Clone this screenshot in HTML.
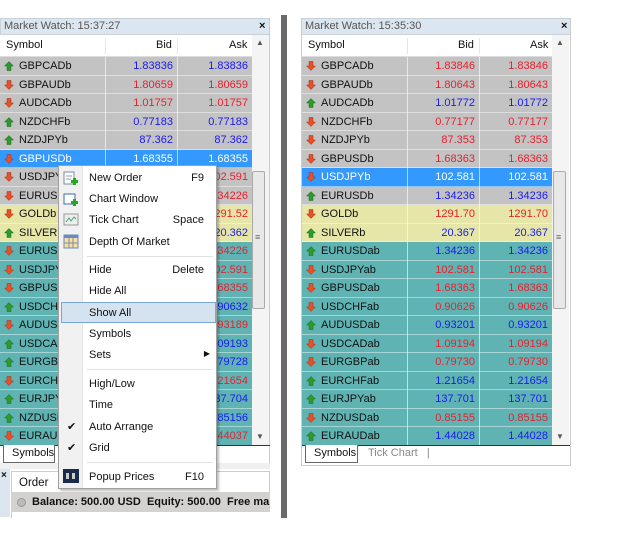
<!DOCTYPE html>
<html><head><meta charset="utf-8">
<style>
*{margin:0;padding:0;box-sizing:border-box}
body{width:642px;height:542px;background:#fff;position:relative;overflow:hidden;font-family:"Liberation Sans",sans-serif;font-size:11px;color:#111}
.a{position:absolute}
.title{position:absolute;height:17px;background:#dce6f0;border:1px solid #c8d0d8;color:#555;font-size:11px;line-height:15px;padding-left:3px}
.x{position:absolute;font-weight:bold;font-size:11px}
.hdr{position:absolute;height:22px;background:#fff;border-bottom:1px solid #ddd}
.hdr span{position:absolute;top:4px}
.row{position:absolute;height:18.5px;line-height:19px;border-bottom:1px solid rgba(255,255,255,.45)}
.row .s{position:absolute;left:19px;top:0}
.row .b,.row .k{position:absolute;top:0;text-align:right}
.row i{position:absolute;left:4px;top:4px;width:10px;height:10px;display:block;line-height:0}
.row i svg{display:block}
.g{background:#c3c3c3}.y{background:#e6e6a8}.t{background:#5fb3b3}.sel{background:#3399ff;color:#fff}
.sel .b,.sel .k{color:#fff!important}
.bl{color:#1a1aee}.rd{color:#e8202e}
.vl{position:absolute;width:1px;background:rgba(255,255,255,.6)}
.sb{position:absolute;background:#f4f4f4}
.thumb{position:absolute;background:#e8e8e8;border:1px solid #aaa;border-radius:2px}
.menu{position:absolute;left:58px;top:165px;width:159px;height:324px;background:#fff;border:1px solid #a0a0a0;box-shadow:2px 2px 2px rgba(0,0,0,.25)}
.menu .ic{position:absolute;left:0;top:0;width:24px;height:100%;background:#f1f1f1;border-right:1px solid #e4e4e4}
.mi{position:absolute;left:30px;font-size:11px;color:#111}
.sc{position:absolute;right:12px;font-size:11px}
.sep{position:absolute;left:28px;right:3px;height:1px;background:#e2e2e2}
</style></head><body>

<div class="title" style="left:0;top:18px;width:270px">Market Watch: 15:37:27</div>
<div class="x" style="left:259px;top:20px">×</div>
<div class="hdr" style="left:0;top:35px;width:252px">
<span style="left:6px">Symbol</span><span style="left:156px">Bid</span><span style="left:229px">Ask</span>
</div>
<div class="a" style="left:105px;top:38px;width:1px;height:16px;background:#e6e6e6"></div>
<div class="a" style="left:177px;top:38px;width:1px;height:16px;background:#e6e6e6"></div>
<div class="sb" style="left:252px;top:35px;width:17px;height:410px"></div>
<div class="a" style="left:256px;top:38px;font-size:8px;color:#555">▲</div>
<div class="a" style="left:256px;top:432px;font-size:8px;color:#555">▼</div>
<div class="thumb" style="left:252px;top:171px;width:13px;height:138px"></div>
<div class="a" style="left:255px;top:232px;font-size:9px;color:#666">≡</div>
<div class="a" style="left:269px;top:18px;width:1px;height:448px;background:#ccc"></div>

<div id="L"></div>

<div class="a" style="left:0;top:445px;width:270px;height:1px;background:#333"></div>
<div class="a" style="left:3px;top:445px;width:52px;height:18px;background:#fff;border:1px solid #666;border-top:none;padding:2px 0 0 8px">Symbols</div>
<div class="a" style="left:0;top:463px;width:270px;height:6px;background:#f0f0f0"></div>
<div class="a" style="left:0;top:469px;width:10px;height:48px;background:#dce6f0"></div>
<div class="x" style="left:1px;top:470px;font-size:10px">×</div>
<div class="a" style="left:11px;top:471px;width:259px;height:21px;border:1px solid #ccc;border-bottom:none;background:#fff;padding:5px 0 0 7px;font-size:11.5px">Order</div>
<div class="a" style="left:11px;top:492px;width:259px;height:20px;background:#d4d2ce;line-height:20px;font-weight:bold;font-size:11px;white-space:nowrap;overflow:hidden;padding-left:21px">Balance: 500.00 USD&nbsp; Equity: 500.00&nbsp; Free margin: 5</div>
<div class="a" style="left:17px;top:498px;width:9px;height:9px;border-radius:50%;background:#bbb;border:1px solid #999"></div>
<div class="a" style="left:11px;top:512px;width:259px;height:6px;background:#fff;border-left:1px solid #ccc"></div>

<div class="a" style="left:281px;top:15px;width:6px;height:503px;background:#6a6a6a"></div>

<div class="title" style="left:301px;top:18px;width:270px">Market Watch: 15:35:30</div>
<div class="x" style="left:561px;top:20px">×</div>
<div class="hdr" style="left:302px;top:35px;width:250px">
<span style="left:6px">Symbol</span><span style="left:156px">Bid</span><span style="left:228px">Ask</span>
</div>
<div class="a" style="left:407px;top:38px;width:1px;height:16px;background:#e6e6e6"></div>
<div class="a" style="left:479px;top:38px;width:1px;height:16px;background:#e6e6e6"></div>
<div class="sb" style="left:552px;top:35px;width:17px;height:410px"></div>
<div class="a" style="left:556px;top:38px;font-size:8px;color:#555">▲</div>
<div class="a" style="left:556px;top:432px;font-size:8px;color:#555">▼</div>
<div class="thumb" style="left:553px;top:171px;width:13px;height:138px"></div>
<div class="a" style="left:556px;top:232px;font-size:9px;color:#666">≡</div>
<div class="a" style="left:301px;top:18px;width:1px;height:448px;background:#ccc"></div>
<div class="a" style="left:570px;top:18px;width:1px;height:448px;background:#ccc"></div>
<div id="R"></div>
<div class="a" style="left:302px;top:445px;width:268px;height:1px;background:#333"></div>
<div class="a" style="left:305px;top:445px;width:53px;height:18px;background:#fff;border:1px solid #666;border-top:none;padding:2px 0 0 8px">Symbols</div>
<div class="a" style="left:368px;top:447px;color:#888">Tick Chart&nbsp;&nbsp; |</div>
<div class="a" style="left:301px;top:465px;width:270px;height:1px;background:#ccc"></div>

<div class="menu">
<div class="ic"></div>
<svg class="a" style="left:4px;top:5px" width="16" height="16"><rect x="1" y="1" width="10" height="12" fill="#fff" stroke="#7a8aa0"/><line x1="3" y1="5" x2="9" y2="5" stroke="#99a"/><line x1="3" y1="8" x2="8" y2="8" stroke="#99a"/><rect x="8" y="9" width="7" height="3" fill="#2a2"/><rect x="10" y="7" width="3" height="7" fill="#2a2"/></svg>
<div class="mi" style="top:6px">New Order</div><div class="sc" style="top:6px">F9</div>
<svg class="a" style="left:4px;top:26px" width="16" height="16"><rect x="1" y="2" width="11" height="10" fill="#fff" stroke="#3a6ab0"/><rect x="8" y="9" width="7" height="3" fill="#2a2"/><rect x="10" y="7" width="3" height="7" fill="#2a2"/></svg>
<div class="mi" style="top:27px">Chart Window</div>
<svg class="a" style="left:4px;top:47px" width="16" height="14"><rect x="1" y="1" width="14" height="11" fill="#eee" stroke="#999"/><polyline points="3,9 6,5 8,8 11,4 13,6" fill="none" stroke="#4a7" /></svg>
<div class="mi" style="top:48px">Tick Chart</div><div class="sc" style="top:48px">Space</div>
<svg class="a" style="left:4px;top:68px" width="16" height="15"><rect x="1" y="1" width="14" height="13" fill="#f4e0a0" stroke="#6a8ac0"/><rect x="1" y="1" width="14" height="3" fill="#6a8ac0"/><line x1="6" y1="4" x2="6" y2="14" stroke="#88a"/><line x1="10" y1="4" x2="10" y2="14" stroke="#88a"/><line x1="1" y1="9" x2="15" y2="9" stroke="#88a"/></svg>
<div class="mi" style="top:70px">Depth Of Market</div>
<div class="sep" style="top:90px"></div>
<div class="mi" style="top:98px">Hide</div><div class="sc" style="top:98px">Delete</div>
<div class="mi" style="top:119px">Hide All</div>
<div class="a" style="left:2px;top:136px;width:155px;height:21px;background:#d5e2f0;border:1px solid #7aa6d6"></div>
<div class="mi" style="top:141px">Show All</div>
<div class="mi" style="top:162px">Symbols</div>
<div class="mi" style="top:183px">Sets</div><div class="sc" style="top:183px;right:6px;font-size:8px">▶</div>
<div class="sep" style="top:203px"></div>
<div class="mi" style="top:212px">High/Low</div>
<div class="mi" style="top:233px">Time</div>
<div class="a" style="left:8px;top:254px;font-size:11px">✔</div>
<div class="mi" style="top:255px">Auto Arrange</div>
<div class="a" style="left:8px;top:275px;font-size:11px">✔</div>
<div class="mi" style="top:276px">Grid</div>
<div class="sep" style="top:296px"></div>
<svg class="a" style="left:4px;top:303px" width="16" height="14"><rect x="0" y="0" width="16" height="14" fill="#1a2a4a"/><rect x="3" y="4" width="3" height="6" fill="#ccc"/><rect x="9" y="4" width="3" height="6" fill="#ccc"/></svg>
<div class="mi" style="top:305px">Popup Prices</div><div class="sc" style="top:305px">F10</div>
</div>

<script>
function build(id,x0,c1,c2,c3,rows){
 var h='';
 rows.forEach(function(r,i){
  var top=57+i*18.5;
  var up=r[4]=='u';
  var col=r[3]=='b'?'bl':'rd';
  var arrow=up?'<svg width="10" height="10"><path d="M5 0.5 L9.5 5 L7 5 L7 9.5 L3 9.5 L3 5 L0.5 5 Z" fill="#2c9a2c" stroke="#1a6a1a" stroke-width=".5"/></svg>':'<svg width="10" height="10"><path d="M5 9.5 L9.5 5 L7 5 L7 0.5 L3 0.5 L3 5 L0.5 5 Z" fill="#e8502a" stroke="#a03010" stroke-width=".5"/></svg>';
  h+='<div class="row '+r[0]+'" style="left:'+x0+'px;top:'+top+'px;width:'+(c3-x0)+'px"><i>'+arrow+'</i><span class="s">'+r[1]+'</span><span class="b '+col+'" style="left:'+(c1-x0)+'px;width:'+(c2-c1-4)+'px">'+r[2]+'</span><span class="k '+col+'" style="left:'+(c2-x0)+'px;width:'+(c3-c2-4)+'px">'+r[2]+'</span></div>';
 });
 h+='<div class="vl" style="left:'+c1+'px;top:57px;height:388px"></div><div class="vl" style="left:'+c2+'px;top:57px;height:388px"></div>';
 document.getElementById(id).outerHTML=h;
}
build('L',0,105,177,252,[
['g','GBPCADb','1.83836','b','u'],['g','GBPAUDb','1.80659','r','d'],['g','AUDCADb','1.01757','r','d'],['g','NZDCHFb','0.77183','b','u'],['g','NZDJPYb','87.362','b','u'],
['sel','GBPUSDb','1.68355','r','d'],['g','USDJPYb','102.591','r','d'],['g','EURUSDb','1.34226','r','d'],['y','GOLDb','1291.52','r','d'],['y','SILVERb','20.362','b','u'],
['t','EURUSDab','1.34226','r','d'],['t','USDJPYab','102.591','r','d'],['t','GBPUSDab','1.68355','r','d'],['t','USDCHFab','0.90632','b','u'],['t','AUDUSDab','0.93189','r','d'],
['t','USDCADab','1.09193','b','u'],['t','EURGBPab','0.79728','b','u'],['t','EURCHFab','1.21654','r','d'],['t','EURJPYab','137.704','b','u'],['t','NZDUSDab','0.85156','b','u'],['t','EURAUDab','1.44037','r','d']]);
build('R',302,407,479,552,[
['g','GBPCADb','1.83846','r','d'],['g','GBPAUDb','1.80643','r','d'],['g','AUDCADb','1.01772','b','u'],['g','NZDCHFb','0.77177','r','d'],['g','NZDJPYb','87.353','r','d'],
['g','GBPUSDb','1.68363','r','d'],['sel','USDJPYb','102.581','r','d'],['g','EURUSDb','1.34236','b','u'],['y','GOLDb','1291.70','r','d'],['y','SILVERb','20.367','b','u'],
['t','EURUSDab','1.34236','b','u'],['t','USDJPYab','102.581','r','d'],['t','GBPUSDab','1.68363','r','d'],['t','USDCHFab','0.90626','r','d'],['t','AUDUSDab','0.93201','b','u'],
['t','USDCADab','1.09194','r','d'],['t','EURGBPab','0.79730','r','d'],['t','EURCHFab','1.21654','b','u'],['t','EURJPYab','137.701','b','u'],['t','NZDUSDab','0.85155','r','d'],['t','EURAUDab','1.44028','b','u']]);
</script>
</body></html>
